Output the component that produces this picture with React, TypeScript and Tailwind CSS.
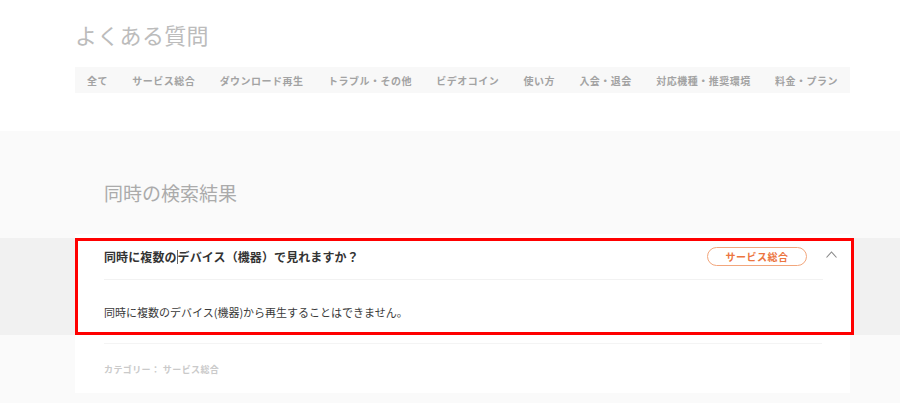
import * as React from 'react';

const categories = [
  '全て',
  'サービス総合',
  'ダウンロード再生',
  'トラブル・その他',
  'ビデオコイン',
  '使い方',
  '入会・退会',
  '対応機種・推奨環境',
  '料金・プラン',
];

const jpFont = { fontFamily: '"Noto Sans CJK JP", "Noto Sans", sans-serif' };

function ChevronUp() {
  return (
    <svg width="11" height="7" viewBox="0 0 11 7" fill="none">
      <polyline points="0.5,6.5 5.5,1 10.5,6.5" stroke="#8a8a8a" strokeWidth="1.1" />
    </svg>
  );
}

function App() {
  return (
    <div className="min-h-screen bg-[#fafafa]" style={jpFont}>
      <header className="h-[131px] bg-white pl-[75px]">
        <h1 className="pt-[19px] text-[22px] leading-[30px] tracking-[0.3px] text-[#bcbcbc]">
          よくある質問
        </h1>
        <nav className="mt-[18px] flex h-[26px] w-[775px] items-center justify-between bg-[#f8f8f8] px-3">
          {categories.map((c) => (
            <span
              key={c}
              className="text-[10px] font-bold tracking-[0.5px] text-[#a3a3a3]"
            >
              {c}
            </span>
          ))}
        </nav>
      </header>

      <section>
        <h2 className="pl-[104px] pt-[48px] text-[19px] leading-[28px] text-[#ababab]">
          同時の検索結果
        </h2>

        <div className="mt-[27px]">
          <div className="ml-[75px] h-[4px] w-[775px] bg-white" />

          {/* highlighted question row */}
          <div className="h-[97px] bg-[#f1f1f1]">
            <div className="ml-[75px] h-full w-[779px] border-[3px] border-[#ff0000] bg-white pl-[26px]">
              <div className="flex items-center pr-[14px] pt-[6px]">
                <p className="flex flex-1 items-center text-[12px] font-bold leading-[19px] tracking-[0.1px] text-[#333]">
                  <span>同時に複数の</span>
                  <span className="h-[14px] border-l border-[#666]" />
                  <span>デバイス（機器）で見れますか？</span>
                </p>
                <span className="flex h-[19px] w-[100px] items-center justify-center rounded-full border border-[#f2a67c] text-[10px] font-bold tracking-[0.5px] text-[#ec7540]">
                  サービス総合
                </span>
                <span className="ml-[19px] mb-[4px] flex">
                  <ChevronUp />
                </span>
              </div>
              <div className="mr-[28px] mt-[13px] h-px bg-[#f2f2f2]" />
              <p className="mt-[23px] text-[11px] leading-[18px] text-[#3a3a3a]">
                同時に複数のデバイス(機器)から再生することはできません。
              </p>
            </div>
          </div>

          <div className="ml-[75px] w-[775px] bg-white pb-[16px] pl-[29px] pr-[28px] pt-[8px]">
            <div className="h-px bg-[#f4f4f4]" />
            <p className="mt-[19px] text-[9px] font-bold leading-[14px] tracking-[0.4px] text-[#cacaca]">
              カテゴリー： サービス総合
            </p>
          </div>
        </div>
      </section>
    </div>
  );
}

export default App;
